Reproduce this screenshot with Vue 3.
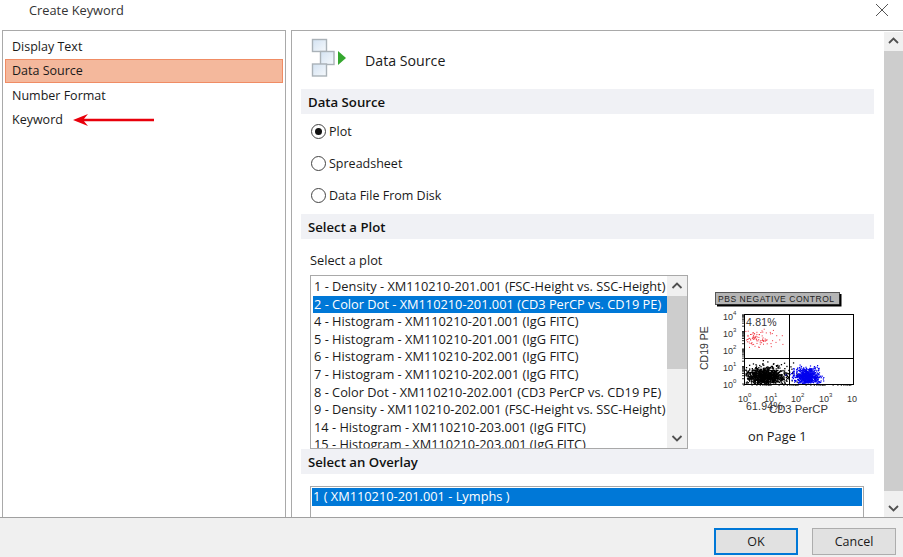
<script setup>
  const navItems = ['Display Text', 'Data Source', 'Number Format', 'Keyword'];
  const selectedNav = 'Data Source';

  const sourceOptions = [
    { label: 'Plot', checked: true },
    { label: 'Spreadsheet', checked: false },
    { label: 'Data File From Disk', checked: false }
  ];

  const plots = [
    '1 - Density - XM110210-201.001 (FSC-Height vs. SSC-Height)',
    '2 - Color Dot - XM110210-201.001 (CD3 PerCP vs. CD19 PE)',
    '4 - Histogram - XM110210-201.001 (IgG FITC)',
    '5 - Histogram - XM110210-201.001 (IgG FITC)',
    '6 - Histogram - XM110210-202.001 (IgG FITC)',
    '7 - Histogram - XM110210-202.001 (IgG FITC)',
    '8 - Color Dot - XM110210-202.001 (CD3 PerCP vs. CD19 PE)',
    '9 - Density - XM110210-202.001 (FSC-Height vs. SSC-Height)',
    '14 - Histogram - XM110210-203.001 (IgG FITC)',
    '15 - Histogram - XM110210-203.001 (IgG FITC)'
  ];

  // small seeded random so the dots stay the same on every load
  let seed = 12345;
  function rnd() {
    seed = (seed * 16807) % 2147483647;
    return seed / 2147483647;
  }
  function gauss() {
    return (rnd() + rnd() + rnd() + rnd() - 2) / 2;
  }
  function cloud(count, cx, cy, sx, sy) {
    const out = [];
    for (let i = 0; i < count; i++) {
      const x = cx + gauss() * sx;
      const y = cy + gauss() * sy;
      if (x > 1 && x < 108 && y > 1 && y < 69) {
        out.push({ x: +x.toFixed(1), y: +y.toFixed(1) });
      }
    }
    return out;
  }

  const redDots = [...cloud(70, 10, 25, 20, 14), ...cloud(22, 24, 24, 26, 18)];
  const blackDots = [...cloud(1000, 20, 62, 34, 15), ...cloud(60, 28, 58, 50, 20)];
  const blueDots = [...cloud(650, 63, 62, 20, 14), ...cloud(40, 62, 60, 32, 18)];

  const decades = [0, 27, 54, 81, 108];
  const xTicks = [];
  decades.slice(0, 4).forEach((d) => {
    [1, 2, 3, 4, 5, 6, 7, 8, 9].forEach((n) => xTicks.push(+(d + Math.log10(n) * 27).toFixed(1)));
  });
  const yTicks = [];
  [0, 17.5, 35, 52.5].forEach((d) => {
    [1, 2, 3, 4, 5, 6, 7, 8, 9].forEach((n) => yTicks.push(+(70 - d - Math.log10(n) * 17.5).toFixed(1)));
  });
</script>

<template>
  <div class="dialog">
    <header class="title-bar">
      <span class="title">Create Keyword</span>
      <svg class="close" width="14" height="14" viewBox="0 0 14 14">
        <path d="M1 1 L13 13 M13 1 L1 13" stroke="#555" stroke-width="1" fill="none" />
      </svg>
    </header>

    <div class="body">
      <nav class="nav">
        <div
          v-for="item in navItems"
          :key="item"
          :class="['nav-item', { selected: item === selectedNav }]"
        >
          <span>{{ item }}</span>
          <svg v-if="item === 'Keyword'" class="arrow" width="81" height="14" viewBox="0 0 81 14">
            <path d="M0 7 L15 1 L11 5.8 L81 5.8 L81 8.2 L11 8.2 L15 13 Z" fill="#e8000b" />
          </svg>
        </div>
      </nav>

      <section class="panel">
        <div class="content">
          <div class="page-head">
            <svg class="page-icon" width="36" height="39" viewBox="0 0 36 39">
              <defs>
                <linearGradient id="boxFill" x1="0" y1="0" x2="1" y2="1">
                  <stop offset="0" stop-color="#d3e2f2" />
                  <stop offset="1" stop-color="#f6f9fc" />
                </linearGradient>
              </defs>
              <rect x="1.5" y="1.5" width="14" height="12" fill="url(#boxFill)" stroke="#aab2b8" stroke-width="1.4" />
              <rect x="9.5" y="13.5" width="13.5" height="13" fill="url(#boxFill)" stroke="#aab2b8" stroke-width="1.4" />
              <rect x="1.5" y="26" width="14" height="12" fill="url(#boxFill)" stroke="#aab2b8" stroke-width="1.4" />
              <path d="M27 13 L35 20 L27 27 Z" fill="#35a72f" />
            </svg>
            <span class="page-title">Data Source</span>
          </div>

          <h3 class="section-bar">Data Source</h3>
          <div class="radios">
            <label v-for="opt in sourceOptions" :key="opt.label" class="radio-row">
              <span :class="['radio', { checked: opt.checked }]"></span>
              {{ opt.label }}
            </label>
          </div>

          <h3 class="section-bar">Select a Plot</h3>
          <p class="field-label">Select a plot</p>
          <div class="plot-row">
            <div class="listbox">
              <div class="rows">
                <div
                  v-for="(plot, i) in plots"
                  :key="plot"
                  :class="['row', { selected: i === 1 }]"
                >{{ plot }}</div>
              </div>
              <div class="list-scroll">
                <svg width="20" height="20" viewBox="0 0 20 20">
                  <path d="M5.5 12 L10 7.5 L14.5 12" stroke="#505050" stroke-width="1.8" fill="none" />
                </svg>
                <div class="list-thumb"></div>
                <svg class="down" width="20" height="20" viewBox="0 0 20 20">
                  <path d="M5.5 8 L10 12.5 L14.5 8" stroke="#505050" stroke-width="1.8" fill="none" />
                </svg>
              </div>
            </div>

            <figure class="preview">
              <svg width="170" height="130" viewBox="0 0 170 130">
                <rect x="27.5" y="2.5" width="124" height="12" fill="#b4b4b4" stroke="#555" />
                <path d="M152.5 4 V15.5 H29" stroke="#000" stroke-width="2" fill="none" />
                <text x="30" y="11.5" class="plot-title">PBS NEGATIVE CONTROL</text>

                <g transform="translate(56 24)">
                  <rect v-for="(d, i) in redDots" :key="'r' + i" :x="d.x" :y="d.y" width="1" height="1" fill="#f0303c" />
                  <rect v-for="(d, i) in blackDots" :key="'k' + i" :x="d.x" :y="d.y" width="1.3" height="1.3" fill="#000" />
                  <rect v-for="(d, i) in blueDots" :key="'b' + i" :x="d.x" :y="d.y" width="1.2" height="1.2" fill="#0000ee" />
                  <rect x="0.5" y="0.5" width="109" height="70" fill="none" stroke="#000" />
                  <path d="M45.5 0 V70 M0 44.5 H109" stroke="#000" fill="none" />
                  <path v-for="t in xTicks" :key="'x' + t" :d="`M${t} 70 v2`" stroke="#000" stroke-width="0.8" />
                  <path v-for="t in yTicks" :key="'y' + t" :d="`M0 ${t} h-2`" stroke="#000" stroke-width="0.8" />
                  <text x="2" y="12" class="plot-text">4.81%</text>
                </g>

                <g class="axis">
                  <text x="35" y="30">10</text><text x="45" y="25" class="exp">4</text>
                  <text x="35" y="47">10</text><text x="45" y="42" class="exp">3</text>
                  <text x="35" y="64">10</text><text x="45" y="59" class="exp">2</text>
                  <text x="35" y="81">10</text><text x="45" y="76" class="exp">1</text>
                  <text x="35" y="98">10</text><text x="45" y="93" class="exp">0</text>
                  <text x="50" y="112">10</text><text x="60" y="107" class="exp">0</text>
                  <text x="76" y="112">10</text><text x="86" y="107" class="exp">1</text>
                  <text x="103" y="112">10</text><text x="113" y="107" class="exp">2</text>
                  <text x="131" y="112">10</text><text x="141" y="107" class="exp">3</text>
                  <text x="159" y="112">10</text>
                </g>

                <text x="58" y="120" class="plot-text">61.94%</text>
                <text x="81" y="123" class="plot-label">CD3 PerCP</text>
                <text transform="translate(20 80) rotate(-90)" class="plot-label side">CD19 PE</text>
              </svg>
              <figcaption>on Page 1</figcaption>
            </figure>
          </div>

          <h3 class="section-bar">Select an Overlay</h3>
          <div class="overlay-list">
            <div class="row selected">1 ( XM110210-201.001 - Lymphs )</div>
          </div>
        </div>

        <div class="panel-scroll">
          <svg width="19" height="19" viewBox="0 0 19 19">
            <path d="M5 11 L9.5 6.5 L14 11" stroke="#505050" stroke-width="1.8" fill="none" />
          </svg>
          <div class="panel-thumb"></div>
          <svg width="19" height="19" viewBox="0 0 19 19">
            <path d="M5 7 L9.5 11.5 L14 7" stroke="#505050" stroke-width="1.8" fill="none" />
          </svg>
        </div>
      </section>
    </div>

    <footer class="footer">
      <button class="btn primary">OK</button>
      <button class="btn">Cancel</button>
    </footer>
  </div>
</template>

<style scoped>
  .dialog {
    display: flex;
    flex-direction: column;
    width: 903px;
    height: 557px;
    overflow: hidden;
    background: #fff;
    color: #1a1a1a;
    font-family: "Open Sans", "Liberation Sans", sans-serif;
    font-size: 12.8px;
  }

  .title-bar {
    display: flex;
    align-items: center;
    justify-content: space-between;
    height: 30px;
    flex: none;
    padding: 0 14px 10px 29px;
    box-sizing: border-box;
  }

  .title {
    font-size: 12.8px;
    color: #333;
  }

  .body {
    display: flex;
    gap: 5px;
    height: 488px;
    flex: none;
    padding-left: 2px;
  }

  .nav {
    width: 284px;
    box-sizing: border-box;
    border: 1px solid #a9a9a9;
    padding: 3px 2px;
  }

  .nav-item {
    display: flex;
    align-items: center;
    height: 24.5px;
    box-sizing: border-box;
    padding-left: 6px;
    border: 1px solid transparent;
    font-size: 12.5px;
  }

  .nav-item.selected {
    background: #f4b89c;
    border-color: #f08c64;
  }

  .arrow {
    margin-left: 10px;
  }

  .panel {
    display: flex;
    flex: 1;
    min-width: 0;
    border: 1px solid #a9a9a9;
    border-bottom: none;
    border-right: none;
    overflow: hidden;
  }

  .content {
    flex: 1;
    min-width: 0;
    padding: 7px 10px 0 9px;
    overflow: hidden;
  }

  .page-head {
    display: flex;
    align-items: flex-start;
    height: 51px;
    padding-left: 10px;
  }

  .page-title {
    margin: 13px 0 0 18px;
    font-size: 14.2px;
  }

  .section-bar {
    margin: 0;
    height: 25px;
    line-height: 26px;
    padding-left: 7px;
    background: #f0f1f5;
    font-size: 13.2px;
    font-weight: 600;
    color: #111;
  }

  .radios {
    display: flex;
    flex-direction: column;
    gap: 14px;
    padding: 8px 0 10px 10px;
    font-size: 12.5px;
  }

  .radio-row {
    display: flex;
    align-items: center;
    gap: 3px;
    height: 18px;
  }

  .radio {
    position: relative;
    width: 15px;
    height: 15px;
    box-sizing: border-box;
    border: 1px solid #444;
    border-radius: 50%;
  }

  .radio.checked::after {
    content: "";
    position: absolute;
    left: 3px;
    top: 3px;
    width: 7px;
    height: 7px;
    border-radius: 50%;
    background: #111;
  }

  .field-label {
    margin: 0;
    padding: 13px 0 6px 9px;
    height: 17px;
    line-height: 17px;
  }

  .plot-row {
    display: flex;
    height: 174px;
    padding-left: 9px;
  }

  .listbox {
    display: flex;
    width: 378px;
    height: 174px;
    box-sizing: border-box;
    border: 1px solid #a9a9a9;
    padding: 2px 0 0 2px;
    overflow: hidden;
  }

  .rows {
    flex: 1;
    min-width: 0;
    overflow: hidden;
  }

  .row {
    height: 17.6px;
    line-height: 16px;
    padding-left: 1px;
    white-space: nowrap;
  }

  .row.selected {
    background: #0078d7;
    color: #fff;
  }

  .list-scroll {
    display: flex;
    flex-direction: column;
    width: 20px;
    flex: none;
    margin-top: -2px;
    background: #f0f0f0;
  }

  .list-thumb {
    height: 73px;
    background: #cdcdcd;
  }

  .list-scroll .down {
    margin-top: auto;
  }

  .preview {
    margin: 0;
    flex: 1;
    padding: 15px 0 0 0;
  }

  .preview svg {
    display: block;
  }

  .preview figcaption {
    margin: 7px 0 0 60px;
  }

  .plot-title {
    font-family: "Liberation Sans", sans-serif;
    font-size: 8.5px;
    letter-spacing: 0.55px;
    fill: #222;
  }

  .plot-text {
    font-family: "Liberation Sans", sans-serif;
    font-size: 10.5px;
    letter-spacing: 0.2px;
    fill: #333;
  }

  .plot-label {
    font-family: "Liberation Sans", sans-serif;
    font-size: 11.3px;
    fill: #333;
  }

  .plot-label.side {
    font-size: 10.5px;
  }

  .axis text {
    font-family: "Liberation Sans", sans-serif;
    font-size: 9px;
    fill: #333;
  }

  .axis text.exp {
    font-size: 6px;
  }

  .overlay-list {
    margin: 12px 10px 0 9px;
    height: 60px;
    box-sizing: border-box;
    border: 1px solid #a9a9a9;
    padding: 1px;
  }

  .panel-scroll {
    display: flex;
    flex-direction: column;
    justify-content: space-between;
    width: 19px;
    flex: none;
    margin-top: 1px;
    background: #f0f0f0;
  }

  .panel-thumb {
    flex: 1;
    margin-bottom: 8px;
    background: #cdcdcd;
  }

  .footer {
    display: flex;
    flex: 1;
    justify-content: flex-end;
    align-items: flex-start;
    gap: 14px;
    padding: 10px 7px 0 0;
    background: #f0f0f0;
    border-top: 1px solid #a0a0a0;
    margin-top: -1px;
  }

  .btn {
    width: 84px;
    height: 27px;
    box-sizing: border-box;
    border: 1px solid #adadad;
    background: #e1e1e1;
    color: #1a1a1a;
    font-family: inherit;
    font-size: 12.5px;
  }

  .btn.primary {
    border: 2px solid #0078d7;
  }
</style>
